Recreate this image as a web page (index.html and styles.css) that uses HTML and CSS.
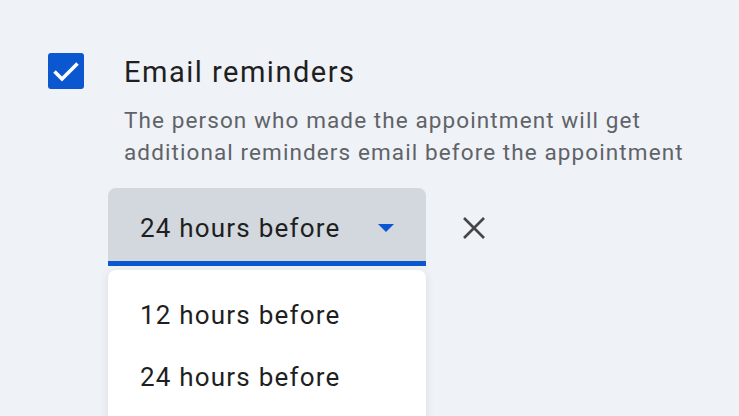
FILE: index.html
```html
<!DOCTYPE html>
<html>
<head>
<meta charset="utf-8">
<link rel="stylesheet" href="styles.css">
</head>
<body>
<div class="page">
  <div class="row">
    <div class="check">
      <svg width="36" height="36" viewBox="0 0 36 36"><rect width="36" height="36" rx="3" fill="#0b57d0"/><path d="M6.5 18.5 L14 26 L29.5 10.5" fill="none" stroke="#fff" stroke-width="3.6"/></svg>
    </div>
    <div class="content">
      <div class="title">Email reminders</div>
      <div class="desc">The person who made the appointment will get additional reminders email before the appointment</div>
    </div>
  </div>
  <div class="controls">
    <div class="selectwrap">
      <div class="select">
        <span class="value">24 hours before</span>
        <svg class="caret" width="16" height="8" viewBox="0 0 16 8"><path d="M0 0 L16 0 L8 8 Z" fill="#0b57d0"/></svg>
      </div>
      <div class="menu">
        <div class="item">12 hours before</div>
        <div class="item">24 hours before</div>
      </div>
    </div>
    <svg class="close" width="24" height="24" viewBox="0 0 24 24"><path d="M2 2 L22 22 M22 2 L2 22" stroke="#444746" stroke-width="2.6" fill="none"/></svg>
  </div>
</div>
</body>
</html>
```
FILE: styles.css
```css
html, body { margin: 0; padding: 0; }
body {
  background: #eff2f7;
  font-family: Roboto, "Noto Sans", sans-serif;
  width: 739px;
  height: 416px;
  overflow: hidden;
}
.page { padding: 53px 0 0 48px; height: 363px; overflow: hidden; }
.row { display: flex; gap: 40px; }
.check { width: 36px; height: 36px; flex: none; }
.check svg { display: block; }
.content { padding-top: 1px; }
.title { font-size: 29px; line-height: 36px; color: #1f1f1f; letter-spacing: 1.5px; }
.desc { font-size: 22.5px; line-height: 32px; color: #5f6368; width: 570px; margin-top: 14px; letter-spacing: 1.1px; }
.controls { display: flex; margin-left: 60px; margin-top: 20px; gap: 36px; }
.selectwrap { width: 318px; }
.select {
  height: 73px;
  background: #d3d7de;
  border-radius: 8px 8px 0 0;
  border-bottom: 5px solid #0b57d0;
  display: flex;
  align-items: center;
  padding: 0 32px;
  width: 254px;
}
.value { font-size: 26px; color: #1f1f1f; flex: 1; padding-top: 6px; letter-spacing: 1.2px; }
.caret { margin-top: 6px; }
.menu {
  margin-top: 4px;
  background: #fff;
  border-radius: 8px;
  box-shadow: 0 2px 10px rgba(60,64,67,0.12);
  padding-top: 14px;
  height: 160px;
}
.item { font-size: 26px; color: #1f1f1f; height: 62px; line-height: 62px; padding-left: 32px; letter-spacing: 1.2px; }
.close { margin-top: 28px; flex: none; }
```
